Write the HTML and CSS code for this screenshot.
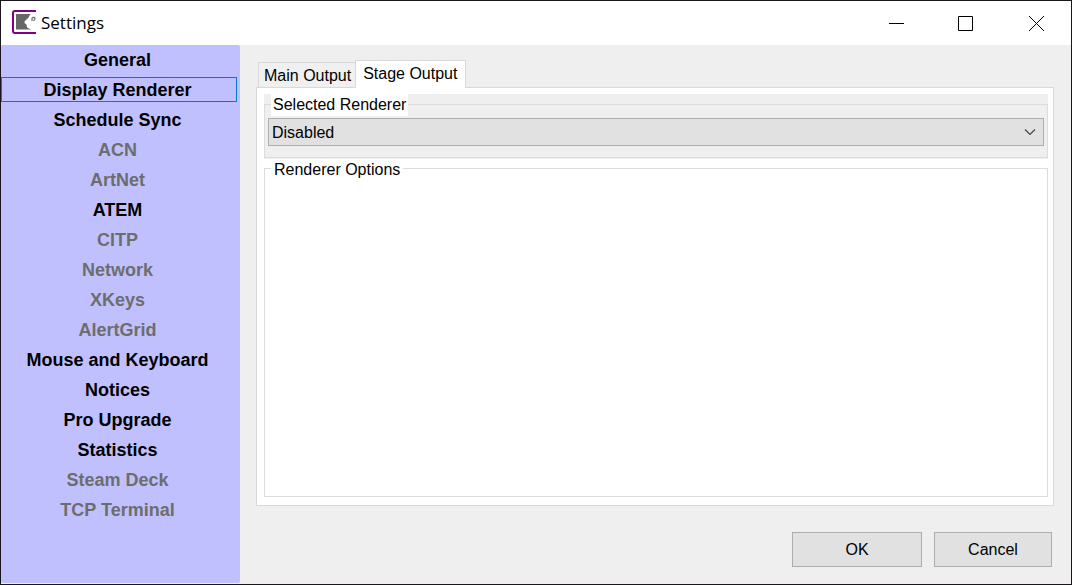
FILE: index.html
```html
<!DOCTYPE html>
<html lang="en">
<head>
<meta charset="utf-8">
<title>Settings</title>
<link rel="stylesheet" href="styles.css">
</head>
<body>
<div class="window">
  <header class="titlebar">
    <svg class="app-icon" width="24" height="24" viewBox="0 0 24 24" aria-hidden="true">
      <path d="M24 1H3Q1 1 1 3V21Q1 23 3 23H24" fill="none" stroke="#800080" stroke-width="2"/>
      <path d="M4 4H19C17.500 4.500 17.500 6 16.500 7.500L12.500 11.500V13L14.500 14.500L15 17.500L19 19.500H4Z" fill="#666"/>
      <path d="M20 11V8.500Q20 7.500 21 7.500H22.500Q23.500 8 22.500 9.500L21.500 11" fill="none" stroke="#777" stroke-width="1.300"/>
    </svg>
    <h1 class="title">Settings</h1>
    <div class="controls">
      <button class="control" aria-label="Minimize"><svg width="16" height="16" viewBox="0 0 16 16"><path d="M1 8.500H16" stroke="#000"/></svg></button>
      <button class="control" aria-label="Maximize"><svg width="16" height="16" viewBox="0 0 16 16"><path d="M.5 1.500H14.500V15.500H.5Z" fill="none" stroke="#000"/></svg></button>
      <button class="control" aria-label="Close"><svg width="16" height="16" viewBox="0 0 16 16"><path d="M1 1L16 16M16 1L1 16" stroke="#000"/></svg></button>
    </div>
  </header>
  <div class="body">
    <nav class="sidebar">
      <button class="item">General</button>
      <button class="item selected" aria-current="page">Display Renderer</button>
      <button class="item">Schedule Sync</button>
      <button class="item" disabled>ACN</button>
      <button class="item" disabled>ArtNet</button>
      <button class="item">ATEM</button>
      <button class="item" disabled>CITP</button>
      <button class="item" disabled>Network</button>
      <button class="item" disabled>XKeys</button>
      <button class="item" disabled>AlertGrid</button>
      <button class="item">Mouse and Keyboard</button>
      <button class="item">Notices</button>
      <button class="item">Pro Upgrade</button>
      <button class="item">Statistics</button>
      <button class="item" disabled>Steam Deck</button>
      <button class="item" disabled>TCP Terminal</button>
    </nav>
    <main class="content">
      <div class="tabs" role="tablist">
        <button class="tab" role="tab" aria-selected="false">Main Output</button>
        <button class="tab active" role="tab" aria-selected="true">Stage Output</button>
      </div>
      <section class="panel" role="tabpanel">
        <div class="group-back">
          <div class="group renderer">
            <label class="caption filled" for="renderer">Selected Renderer</label>
            <div class="select-box">
              <select id="renderer" class="select"><option>Disabled</option></select>
              <svg class="chevron" width="12" height="8" viewBox="0 0 12 8" aria-hidden="true"><path d="M1 1.500L6 6.500L11 1.500" fill="none" stroke="#444" stroke-width="1.200"/></svg>
            </div>
          </div>
        </div>
        <div class="group options">
          <h2 class="caption">Renderer Options</h2>
        </div>
      </section>
      <footer class="actions">
        <button class="button ok">OK</button>
        <button class="button">Cancel</button>
      </footer>
    </main>
  </div>
</div>
</body>
</html>
```
FILE: styles.css
```css
* {
  box-sizing: border-box;
}

body {
  margin: 0;
  font-family: "Liberation Sans", Arial, sans-serif;
  font-size: 16px;
  color: #000;
}

button,
select {
  font: inherit;
  color: inherit;
  margin: 0;
}

.window {
  display: flex;
  flex-direction: column;
  min-height: 100vh;
  border: 1px solid #1a171c;
  background: #efefef;
}

.titlebar {
  display: flex;
  align-items: center;
  height: 44px;
  padding-left: 11px;
  background: #fff;
}

.app-icon {
  margin-bottom: 2px;
}

.title {
  flex: 1;
  margin: 0 0 0 5px;
  font: 17px/24px "Open Sans", "Noto Sans", sans-serif;
}

.controls {
  display: flex;
  height: 100%;
}

.control {
  display: flex;
  align-items: center;
  justify-content: center;
  width: 70px;
  padding: 0;
  border: 0;
  background: none;
}

.body {
  display: flex;
  flex: 1;
}

.sidebar {
  display: flex;
  flex-direction: column;
  gap: 5px;
  width: 239px;
  margin-bottom: 1px;
  padding: 2px 3px 2px 0;
  border-radius: 2px;
  background: #c0c0ff;
}

.item {
  height: 25px;
  padding: 2px 3px 0 0;
  border: 1px solid transparent;
  background: none;
  font-size: 18px;
  font-weight: 700;
  line-height: 21px;
}

.item:disabled {
  color: #6d6d6d;
}

.item.selected {
  border-color: #0078d7;
}

.content {
  display: flex;
  flex: 1;
  flex-direction: column;
  padding: 15px 17px 17px 16px;
}

.tabs {
  display: flex;
  align-items: flex-end;
  padding-left: 2px;
}

.tab {
  height: 25px;
  padding: 2px 4px 0 5px;
  border: 1px solid #d9d9d9;
  border-width: 1px 0 0 1px;
  background: #f0f0f0;
  line-height: 22px;
}

.tab.active {
  z-index: 1;
  height: 28px;
  margin-bottom: -1px;
  padding: 0 8px 2px 7px;
  border-right-width: 1px;
  background: #fff;
}

.panel {
  display: flex;
  flex: 1;
  flex-direction: column;
  gap: 9px;
  padding: 6px 5px 8px 7px;
  border: 1px solid #d9d9d9;
  background: #fff;
}

.group-back {
  padding: 10px 0 1px;
  background: #efefef;
}

.group {
  border: 1px solid #dcdcdc;
}

.renderer {
  padding: 0 3px 11px;
}

.caption {
  display: block;
  width: max-content;
  margin: -11px 0 2px 3px;
  padding: 0 2px;
  background: #fff;
  font-size: 16px;
  font-weight: 400;
  line-height: 22px;
}

.options {
  flex: 1;
}

.options .caption {
  margin: -10px 0 0 6px;
  padding: 0 3px;
}

.select-box {
  display: grid;
  align-items: center;
}

.select,
.chevron {
  grid-area: 1 / 1;
}

.select {
  width: 100%;
  height: 28px;
  padding: 0 24px 0 3px;
  border: 1px solid #adadad;
  border-radius: 0;
  background: #e1e1e1;
  appearance: none;
}

.chevron {
  justify-self: end;
  margin-right: 8px;
  pointer-events: none;
}

.actions {
  display: flex;
  justify-content: flex-end;
  gap: 12px;
  padding: 26px 2px 0 0;
}

.button {
  width: 118px;
  height: 35px;
  padding: 0;
  border: 1px solid #adadad;
  background: #e1e1e1;
}

.ok {
  width: 130px;
}
```
